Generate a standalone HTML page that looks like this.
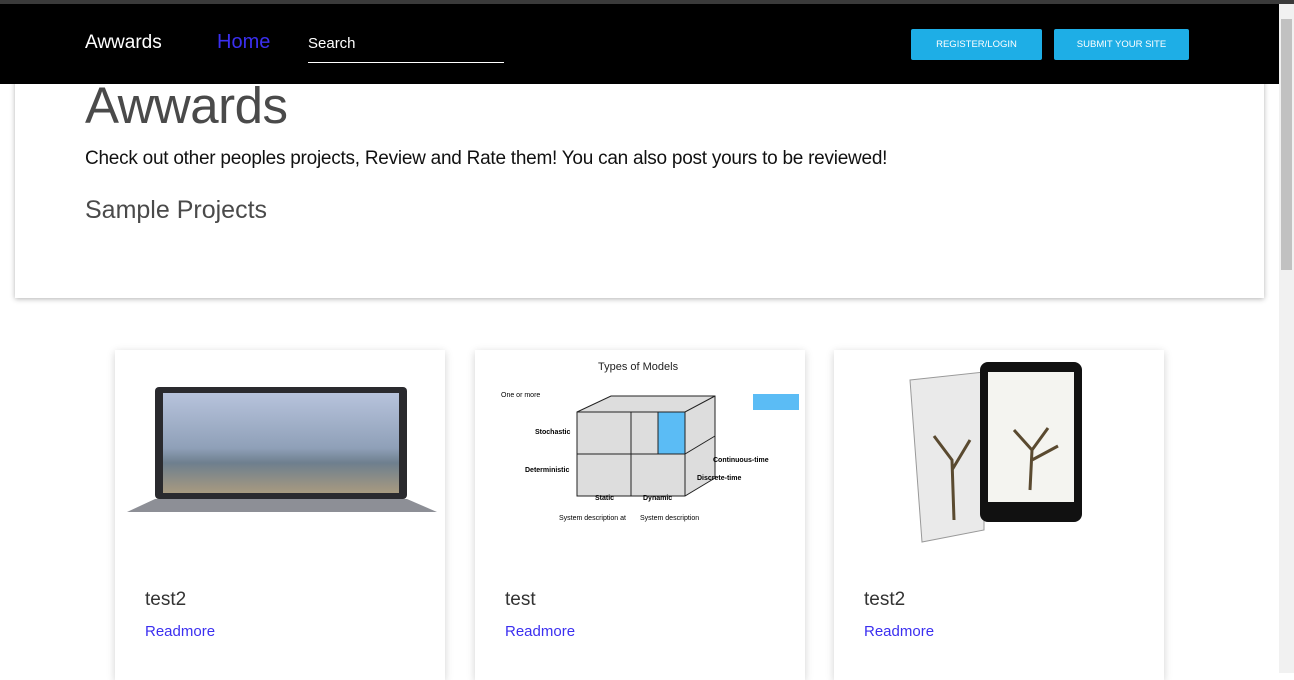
<!DOCTYPE html>
<html><head><meta charset="utf-8"><style>
*{box-sizing:border-box;margin:0;padding:0}
body{width:1294px;height:673px;overflow:hidden;background:#fff;font-family:"Liberation Sans",sans-serif;position:relative}
.topbar{position:absolute;left:0;top:0;width:1294px;height:4px;background:#3a3a3a}
.nav{position:absolute;left:0;top:4px;width:1279px;height:80px;background:#000;z-index:5}
.brand{position:absolute;left:85px;top:28px;color:#fff;font-size:19px}
.home{position:absolute;left:217px;top:27px;color:#3b2ff0;font-size:20px}
.search{position:absolute;left:308px;top:31px;width:196px;height:28px;border-bottom:1.5px solid #fff;color:#fff;font-size:15px}
.btn{position:absolute;top:25px;height:31px;background:#1eaee6;color:#fff;font-size:9.5px;text-align:center;line-height:31px;border-radius:2px}
.jum{position:absolute;left:15px;top:60px;width:1249px;height:238px;background:#fff;box-shadow:0 1px 5px rgba(0,0,0,.3)}
.h1{position:absolute;left:85px;top:76px;font-size:51px;color:#4a4a4a;letter-spacing:-0.5px}
.p{position:absolute;left:85px;top:148px;font-size:19px;color:#111;letter-spacing:-0.25px}
.h3{position:absolute;left:85px;top:196px;font-size:25px;color:#4a4a4a}
.card{position:absolute;top:350px;width:330px;height:330px;background:#fff;box-shadow:0 2px 8px rgba(0,0,0,.18)}
.card .t{position:absolute;left:30px;top:239px;font-size:19px;color:#333}
.card .r{position:absolute;left:30px;top:273px;font-size:15px;color:#3b2ff0}
.sb{position:absolute;left:1279px;top:4px;width:15px;height:669px;background:#f1f1f1}
.thumb{position:absolute;left:1281px;top:19px;width:11px;height:251px;background:#c1c1c1}
</style></head><body>
<div class="topbar"></div>
<div class="jum"></div>
<div class="nav">
<div class="brand">Awwards</div><div class="home">Home</div>
<div class="search">Search</div>
<div class="btn" style="left:911px;width:131px">REGISTER/LOGIN</div>
<div class="btn" style="left:1054px;width:135px">SUBMIT YOUR SITE</div>
</div>
<div class="h1">Awwards</div>
<div class="p">Check out other peoples projects, Review and Rate them! You can also post yours to be reviewed!</div>
<div class="h3">Sample Projects</div>

<div class="card" style="left:115px">
<svg width="330" height="200" style="position:absolute;left:0;top:0">
<defs><linearGradient id="g" x1="0" y1="0" x2="0" y2="1"><stop offset="0" stop-color="#b7c3dc"/><stop offset=".55" stop-color="#8fa0b8"/><stop offset=".7" stop-color="#6e7f8e"/><stop offset="1" stop-color="#a89a80"/></linearGradient></defs>
<rect x="40" y="37" width="252" height="112" rx="4" fill="#2a2a2e"/>
<rect x="48" y="43" width="236" height="100" fill="url(#g)"/>
<path d="M40 149 L292 149 L322 162 L12 162 Z" fill="#8d8f96"/>
</svg>
<div class="t">test2</div><div class="r">Readmore</div></div>

<div class="card" style="left:475px">
<svg width="328" height="200" style="position:absolute;left:0;top:0" font-family="Liberation Sans" font-size="7">
<text x="123" y="20" font-size="11" fill="#222">Types of Models</text>
<path d="M102 62 L136 46 L240 46 L240 128 L210 146 L102 146 Z" fill="#ddd" stroke="#222"/>
<rect x="183" y="62" width="27" height="42" fill="#5bbcf5" stroke="#222"/>
<path d="M102 62 L210 62 L240 46 M210 62 L210 146 M156 62 L156 146 M102 104 L210 104 L240 86" fill="none" stroke="#222"/>
<rect x="278" y="44" width="46" height="16" fill="#5bbcf5"/>
<text x="26" y="47">One or more</text><text x="60" y="84" font-weight="bold">Stochastic</text>
<text x="50" y="122" font-weight="bold">Deterministic</text><text x="238" y="112" font-weight="bold">Continuous-time</text>
<text x="222" y="130" font-weight="bold">Discrete-time</text><text x="120" y="150" font-weight="bold">Static</text><text x="168" y="150" font-weight="bold">Dynamic</text>
<text x="84" y="170">System description at</text><text x="165" y="170">System description</text>
</svg>
<div class="t">test</div><div class="r">Readmore</div></div>

<div class="card" style="left:834px">
<svg width="330" height="200" style="position:absolute;left:0;top:0">
<path d="M76 30 L150 22 L150 180 L88 192 Z" fill="#eaeaea" stroke="#999"/>
<rect x="146" y="12" width="102" height="160" rx="8" fill="#111"/>
<rect x="154" y="22" width="86" height="130" fill="#f4f4f0"/>
<path d="M196 140 L198 100 L180 80 M198 100 L214 78 M198 110 L224 96" stroke="#5a4a30" stroke-width="3" fill="none"/>
<path d="M120 170 L118 110 L100 86 M118 120 L136 90" stroke="#5a4a30" stroke-width="3" fill="none"/>
</svg>
<div class="t">test2</div><div class="r">Readmore</div></div>

<div class="sb"></div><div class="thumb"></div>
</body></html>
